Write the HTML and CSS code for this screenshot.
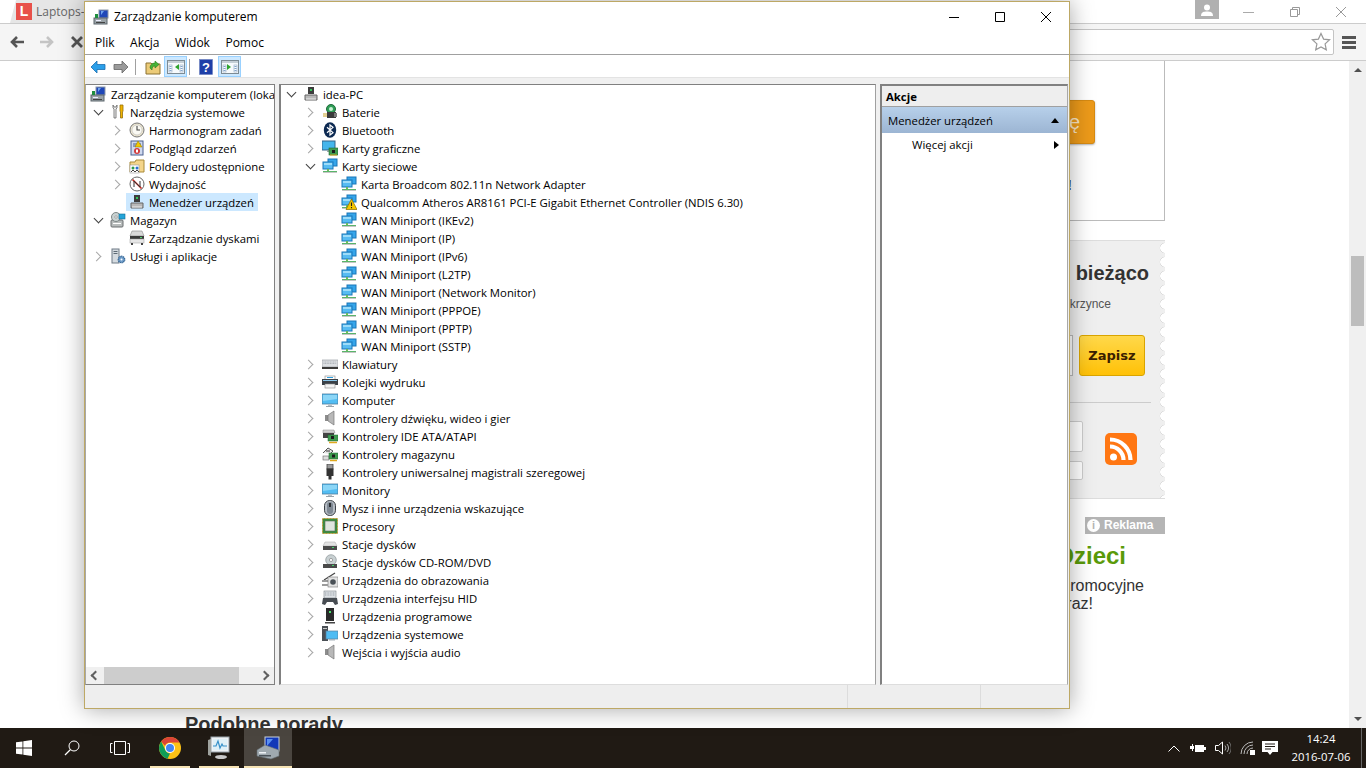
FILE: index.html
```html
<!DOCTYPE html>
<html lang="pl">
<head>
<meta charset="utf-8">
<title>Zarządzanie komputerem</title>
<link rel="stylesheet" href="styles.css">
</head>
<body>
<svg class="sprite" xmlns="http://www.w3.org/2000/svg">
  <symbol id="i-comp" viewBox="0 0 16 16"><rect x="6" y="1" width="9" height="8" fill="#1f47b8" stroke="#8b97a8"/><path d="M8 2h3L8 6z" fill="#6fa4ef"/><rect x="1" y="9" width="13" height="6" fill="#9aa3a8" stroke="#5d666c"/><rect x="3" y="11" width="5" height="1" fill="#eef"/><rect x="3" y="13" width="9" height="1" fill="#444"/><path d="M2 5h3v4H2z" fill="#1e8e3e"/></symbol>
  <symbol id="i-tools" viewBox="0 0 16 16"><path d="M3 1v3l1 1v9h2V5l1-1V1L6 3H4z" fill="#eee" stroke="#666" stroke-width=".8"/><path d="M10 1h3v6l-.5 1v6h-2V8L10 7z" fill="#f0b400" stroke="#94700b" stroke-width=".8"/></symbol>
  <symbol id="i-clock" viewBox="0 0 16 16"><circle cx="8" cy="8" r="7" fill="#ece6d0" stroke="#777"/><circle cx="8" cy="8" r="5" fill="#fbfaf3" stroke="#bbb" stroke-width=".6"/><path d="M8 4v4h3" fill="none" stroke="#444" stroke-width="1.1"/></symbol>
  <symbol id="i-event" viewBox="0 0 16 16"><rect x="2" y="1" width="12" height="14" fill="#cfd9ef" stroke="#4a5f8e"/><path d="M4 4h8M4 6h8" stroke="#4a5f8e"/><path d="M9 1l4 6H6z" fill="#f3c900" stroke="#8d7300" stroke-width=".5"/><circle cx="8" cy="11" r="3" fill="#d23b3b"/><rect x="7" y="9.5" width="2" height="3" fill="#fff"/></symbol>
  <symbol id="i-shared" viewBox="0 0 16 16"><path d="M1 4h5l1-2h8v12H1z" fill="#f4d58a" stroke="#a98a39"/><rect x="1" y="7" width="9" height="8" fill="#fff" stroke="#999" stroke-width=".6"/><circle cx="4" cy="10" r="1.5" fill="#2e9a45"/><circle cx="8" cy="10" r="1.5" fill="#2a6fd0"/><path d="M2 14l2-2 2 2M6 14l2-2 2 2" fill="none" stroke="#444"/></symbol>
  <symbol id="i-perf" viewBox="0 0 16 16"><circle cx="8" cy="8" r="7" fill="#fff" stroke="#666"/><path d="M3.5 3.5l9 9" stroke="#c8281e" stroke-width="1.6"/><path d="M5 11V5l6 6V5" fill="none" stroke="#333"/></symbol>
  <symbol id="i-dev" viewBox="0 0 16 16"><path d="M5 1h6v7H5z" fill="#3c3c3c"/><rect x="7" y="3" width="2" height="2" fill="#34c759"/><path d="M2 9h12v5H2z" fill="#b8b8b8" stroke="#666"/><path d="M3 13h10" stroke="#eee"/></symbol>
  <symbol id="i-storage" viewBox="0 0 16 16"><rect x="1" y="8" width="12" height="7" rx="1" fill="#b8bcbc" stroke="#6a6e70"/><circle cx="6" cy="5" r="4.5" fill="#c9d2d2" stroke="#7d8686"/><circle cx="6" cy="5" r="1.2" fill="#fff" stroke="#666" stroke-width=".5"/><rect x="9" y="2" width="6" height="5" fill="#25a4d8" stroke="#126d95" stroke-width=".6"/><rect x="3" y="11" width="8" height="1" fill="#fff"/></symbol>
  <symbol id="i-disk" viewBox="0 0 16 16"><path d="M3 1h10l2 5H1z" fill="#d9d9d9" stroke="#888" stroke-width=".6"/><rect x="1" y="6" width="14" height="3" fill="#3a3a3a"/><rect x="1" y="9" width="14" height="4" fill="#e6e6e6" stroke="#999" stroke-width=".5"/><rect x="11" y="7" width="2" height="1" fill="#4ed06a"/><rect x="2" y="13" width="2" height="2" fill="#444"/><rect x="12" y="13" width="2" height="2" fill="#444"/></symbol>
  <symbol id="i-serv" viewBox="0 0 16 16"><rect x="2" y="1" width="7" height="14" fill="#d5dbe0" stroke="#6f7b85"/><path d="M3.5 3.5h4M3.5 5.5h4" stroke="#5d6a75"/><circle cx="11.5" cy="11.5" r="3.2" fill="#6e9cc9" stroke="#3a6a98" stroke-dasharray="1.2 .6" stroke-width="1.4"/><circle cx="11.5" cy="11.5" r="1" fill="#fff"/></symbol>
  <symbol id="i-bat" viewBox="0 0 16 16"><circle cx="9" cy="5" r="4.5" fill="#2f9e56" stroke="#1e6b3a"/><circle cx="9" cy="5" r="2" fill="#c8f0d4"/><rect x="5" y="8" width="9" height="6" fill="#3a3a3a"/><path d="M1 10h4M1 12h4" stroke="#c9a227" stroke-width="1.2"/><rect x="12" y="9" width="3" height="4" fill="#7a7a7a"/></symbol>
  <symbol id="i-bt" viewBox="0 0 16 16"><ellipse cx="8" cy="8" rx="6.2" ry="7.7" fill="#0d2a52"/><path d="M5 5.2l6 5.4L8 13V3l3 2.4-6 5.4" fill="none" stroke="#fff" stroke-width="1.2"/></symbol>
  <symbol id="i-gpu" viewBox="0 0 16 16"><rect x="0" y="1" width="13" height="9" fill="#45b6ec" stroke="#35648a"/><path d="M5 10h3v2H5z" fill="#9aa"/><rect x="7" y="8" width="9" height="7" fill="#3f9b4f" stroke="#1f6a30" stroke-width=".6"/><rect x="10" y="10" width="3" height="3" fill="#1c1c1c"/><path d="M8 15h7" stroke="#d9a520"/></symbol>
  <symbol id="i-net" viewBox="0 0 16 16"><rect x="6" y="1" width="9" height="7" fill="#35a5ea" stroke="#1a76b8"/><rect x="1" y="4" width="10" height="7" fill="#57bcf2" stroke="#1a76b8"/><rect x="2" y="5" width="8" height="2" fill="#9ddcf9"/><rect x="5" y="11" width="2" height="2" fill="#6fbb5c"/><rect x="1" y="13" width="14" height="2" fill="#5ab56a"/><rect x="1" y="14" width="14" height="1" fill="#c6c6c6"/></symbol>
  <symbol id="i-netw" viewBox="0 0 16 16"><use href="#i-net"/><path d="M10.5 5L16 15.5H5z" fill="#f6c700" stroke="#8a6a00" stroke-width=".7"/><path d="M10.5 8.5v3.6M10.5 13v1.2" stroke="#222" stroke-width="1.1"/></symbol>
  <symbol id="i-key" viewBox="0 0 16 16"><rect x="0" y="4" width="16" height="7" fill="#dcdfe3" stroke="#8c9298" stroke-width=".6"/><path d="M1.5 6h13M1.5 7.5h13" stroke="#aeb3b9" stroke-dasharray="1 .6"/><rect x="0" y="11" width="16" height="2" fill="#3a3a3a"/></symbol>
  <symbol id="i-print" viewBox="0 0 16 16"><rect x="3" y="2" width="10" height="4" fill="#fff" stroke="#888" stroke-width=".6"/><rect x="5" y="3" width="6" height="1" fill="#2fa0e0"/><rect x="0" y="5" width="16" height="6" fill="#3a4046"/><rect x="1" y="6" width="14" height="1" fill="#8ac6ea"/><rect x="3" y="10" width="10" height="4" fill="#f4f4f4" stroke="#888" stroke-width=".6"/></symbol>
  <symbol id="i-mon" viewBox="0 0 16 16"><rect x="0" y="2" width="16" height="10" fill="#52bdf3" stroke="#4d7d9e" stroke-width=".8"/><path d="M1 3h14v4L1 9z" fill="#8bd6f7"/><rect x="6" y="12" width="4" height="2" fill="#b9c3ca"/><rect x="4" y="14" width="8" height="1" fill="#9aa4ab"/></symbol>
  <symbol id="i-snd" viewBox="0 0 16 16"><path d="M3 5h3v6H3z" fill="#8d8d8d"/><path d="M6 5l6-4v14l-6-4z" fill="#b8b8b8" stroke="#777" stroke-width=".7"/></symbol>
  <symbol id="i-ide" viewBox="0 0 16 16"><path d="M1 2h11l1 3H1z" fill="#cfcfcf" stroke="#888" stroke-width=".5"/><rect x="1" y="5" width="11" height="5" fill="#444"/><rect x="6" y="7" width="10" height="6" fill="#3f9b4f" stroke="#1f6a30" stroke-width=".5"/><rect x="9" y="8" width="3" height="3" fill="#1c1c1c"/><path d="M7 14.500h8" stroke="#e0a91f" stroke-width="1.500"/></symbol>
  <symbol id="i-stor" viewBox="0 0 16 16"><path d="M1 7l5-5 5 3-3 3" fill="#e5e5e5" stroke="#555"/><path d="M4 5h4" stroke="#333"/><rect x="1" y="10" width="6" height="4" fill="#ddd" stroke="#666" stroke-width=".6"/><rect x="7" y="7" width="9" height="6" fill="#3f9b4f" stroke="#1f6a30" stroke-width=".5"/><rect x="10" y="8.500" width="3" height="3" fill="#1c1c1c"/><path d="M8 14.500h7" stroke="#e0a91f" stroke-width="1.500"/></symbol>
  <symbol id="i-usb" viewBox="0 0 16 16"><rect x="5" y="0" width="6" height="5" fill="#9a9a9a" stroke="#444" stroke-width=".8"/><path d="M4.500 4.500h7V12h-2v3.500h-3V12h-2z" fill="#333"/></symbol>
  <symbol id="i-mouse" viewBox="0 0 16 16"><rect x="2.500" y="0.500" width="11" height="15" rx="5.200" fill="#b5bcc4" stroke="#3b4046"/><rect x="5" y="2" width="6" height="12" rx="3" fill="#7e8893"/><rect x="7" y="3" width="2" height="4" fill="#2b2f33"/></symbol>
  <symbol id="i-cpu" viewBox="0 0 16 16"><rect x="0.500" y="0.500" width="15" height="15" fill="#3b8b3f" stroke="#bf9a37" stroke-dasharray="1 .5"/><rect x="3" y="3" width="10" height="10" fill="#dfe5df" stroke="#5a6d5a" stroke-width=".6"/></symbol>
  <symbol id="i-hdd" viewBox="0 0 16 16"><path d="M3 6h10l2 4H1z" fill="#e3e3e3" stroke="#a5a5a5" stroke-width=".5"/><rect x="1" y="10" width="14" height="4" fill="#4a4a4a"/><rect x="10" y="11" width="2" height="1" fill="#45d36a"/></symbol>
  <symbol id="i-cd" viewBox="0 0 16 16"><circle cx="9" cy="6" r="5.300" fill="#c8d0d2" stroke="#8b9497" stroke-width=".7"/><circle cx="9" cy="6" r="1.600" fill="#fff" stroke="#777" stroke-width=".6"/><rect x="1" y="10" width="14" height="4" fill="#4a4a4a"/><rect x="10" y="11" width="2" height="1" fill="#45d36a"/></symbol>
  <symbol id="i-img" viewBox="0 0 16 16"><path d="M2 8L13 1" stroke="#444" stroke-width="1.200"/><rect x="0" y="8" width="6" height="2" fill="#9c9c9c"/><rect x="6" y="5" width="10" height="10" fill="#e3e3e3" stroke="#777" stroke-width=".6"/><circle cx="11" cy="10" r="2.800" fill="#4a5157"/><rect x="0" y="12" width="6" height="2" fill="#9c9c9c"/></symbol>
  <symbol id="i-hid" viewBox="0 0 16 16"><rect x="2" y="1" width="12" height="7" fill="#dfe3e7" stroke="#7c8288" stroke-width=".6"/><path d="M3 3h10M3 5h10" stroke="#9aa1a8" stroke-dasharray="1 .6"/><path d="M1 8h14l1 6-3 1-2-3H5l-2 3-3-1z" fill="#474c52"/></symbol>
  <symbol id="i-soft" viewBox="0 0 16 16"><rect x="4" y="0" width="8" height="13" fill="#2a2a2a"/><rect x="7" y="3" width="2" height="2" fill="#4be06e"/><rect x="3" y="14" width="10" height="1.500" fill="#444"/></symbol>
  <symbol id="i-sys" viewBox="0 0 16 16"><rect x="0" y="0" width="6" height="15" fill="#4a4f55"/><rect x="1" y="2" width="4" height="1" fill="#c9c9c9"/><rect x="4" y="5" width="12" height="8" fill="#4fbcf3" stroke="#5a7f9c" stroke-width=".7"/><rect x="7" y="13" width="6" height="1.500" fill="#aab4bb"/></symbol>
  <symbol id="i-folder" viewBox="0 0 16 16"><path d="M1 4h5l1 1h8v10H1z" fill="#eccb78" stroke="#8c7333"/><path d="M5 9c0-3 2-5 5-5V2l4 3.500L10 9V7C8 7 7 8 7 11z" fill="#46b239" stroke="#2a7a20" stroke-width=".6"/></symbol>
  <symbol id="i-pane" viewBox="0 0 18 16"><rect x="0.500" y="1.500" width="17" height="13" fill="#f7fafc" stroke="#7d8b94"/><rect x="1" y="2" width="16" height="2" fill="#c4ced5"/><rect x="2" y="6" width="3" height="7" fill="#fff" stroke="#8fa9c4" stroke-width=".6"/><path d="M2.500 7.500h2M2.500 9.500h2M2.500 11.500h2" stroke="#4a7cb5" stroke-width=".7"/><rect x="13" y="6" width="3" height="7" fill="#fff" stroke="#8fa9c4" stroke-width=".6"/><path d="M13.500 7.500h2M13.500 9.500h2M13.500 11.500h2" stroke="#4a7cb5" stroke-width=".7"/></symbol>
  <symbol id="i-perfmon" viewBox="0 0 24 24"><rect x="4" y="1" width="18" height="15" fill="#eef2f5" stroke="#9aa3aa"/><rect x="6" y="3" width="14" height="11" fill="#dff0f7"/><path d="M6 10h3l2-5 2 7 2-4 1 2h4" fill="none" stroke="#3790c9" stroke-width="1.200"/><path d="M1 4v15l3 1V3z" fill="#9fa39f"/><ellipse cx="14" cy="21" rx="6" ry="2" fill="#c9c9c9"/></symbol>
  <symbol id="i-mgmt" viewBox="0 0 24 24"><rect x="9" y="1" width="14" height="14" fill="#1238b8" stroke="#c7d1da"/><path d="M11 3h6l-6 7z" fill="#5a8ff0"/><path d="M1 14l8-5 14 5v6l-8 3-14-3z" fill="#9fa9af" stroke="#646e74" stroke-width=".6"/><rect x="3" y="16" width="7" height="1.500" fill="#eef2f5"/><rect x="3" y="19" width="12" height="1.500" fill="#4a5258"/></symbol>
  <symbol id="i-chrome" viewBox="0 0 22 22"><circle cx="11" cy="11" r="11" fill="#fbc116"/><path d="M11 0a11 11 0 0 1 9.530 5.500H11a5.500 5.500 0 0 0-5 3.200L2.200 4.500A11 11 0 0 1 11 0z" fill="#db4437"/><path d="M2.200 4.500L6.500 13.500a5.500 5.500 0 0 0 4.500 3l-2.500 5.200A11 11 0 0 1 2.200 4.500z" fill="#0f9d58"/><circle cx="11" cy="11" r="5" fill="#fff"/><circle cx="11" cy="11" r="4" fill="#4285f4"/></symbol>
</svg>

<div class="browser">
  <div class="tabstrip">
    <div class="tab"><span class="favicon">L</span><span class="tabtitle">Laptops-</span></div>
    <div class="profile"><svg class="profile-ic" viewBox="0 0 14 12"><circle cx="7" cy="3.500" r="3" fill="#fff"/><path d="M1 12c0-4 3-4.500 6-4.500s6 .5 6 4.500z" fill="#fff"/></svg></div>
    <div class="bctrl"><svg class="bctrl-ic" viewBox="0 0 12 12"><path d="M0 6.500h11" stroke="#aaa"/></svg></div>
    <div class="bctrl"><svg class="bctrl-ic" viewBox="0 0 12 12"><path d="M1.500 3.500h7v7h-7zM3.500 3.500v-2h7v7h-2" fill="none" stroke="#999"/></svg></div>
    <div class="bctrl"><svg class="bctrl-ic" viewBox="0 0 12 12"><path d="M1 1l10 10M11 1L1 11" stroke="#999"/></svg></div>
  </div>
  <div class="toolbar">
    <svg class="nav" viewBox="0 0 16 16"><path d="M15 8H3M8 3L3 8l5 5" fill="none" stroke="#555" stroke-width="2.600"/></svg>
    <svg class="nav" viewBox="0 0 16 16"><path d="M1 8h12M8 3l5 5-5 5" fill="none" stroke="#c4c4c4" stroke-width="2.600"/></svg>
    <svg class="nav" viewBox="0 0 16 16"><path d="M3 3l10 10M13 3L3 13" fill="none" stroke="#555" stroke-width="2.800"/></svg>
    <div class="omnibox"><svg class="star" viewBox="0 0 20 20"><path d="M10 1.500l2.600 5.600 6 .7-4.500 4.100 1.200 6L10 15l-5.300 2.900 1.200-6L1.400 7.800l6-.7z" fill="#fff" stroke="#999" stroke-width="1.200"/></svg></div>
    <div class="burger"><i></i><i></i><i></i></div>
  </div>
  <div class="page">
    <div class="main"><h2 class="similar">Podobne porady</h2></div>
    <div class="side">
      <div class="promo">
        <div class="orange">ę</div>
        <div class="bang">!</div>
      </div>
      <div class="newsletter">
        <div class="nl-title">bieżąco</div>
        <div class="nl-sub">krzynce</div>
        <div class="nl-form"><div class="nl-input"></div><div class="nl-btn">Zapisz</div></div>
        <div class="nl-rule"></div>
        <div class="nl-lower">
          <div class="nl-boxes"><div class="nl-box1"></div><div class="nl-box2"></div></div>
          <svg class="rss" viewBox="0 0 32 32"><rect width="32" height="32" rx="5" fill="#ff7713"/><circle cx="8.500" cy="24" r="3.500" fill="#fff"/><path d="M5 13.500a13.500 13.500 0 0 1 13.500 13.500M5 6.500a20.500 20.500 0 0 1 20.500 20.500" fill="none" stroke="#fff" stroke-width="4.200"/></svg>
        </div>
      </div>
      <div class="ad"><span class="ad-i">i</span>Reklama</div>
      <div class="ad-title">Dzieci</div>
      <div class="ad-text">romocyjne</div>
      <div class="ad-text2">raz!</div>
    </div>
    <div class="gutter"></div>
    <div class="scroll"><i class="up"></i><i class="thumb"></i><i class="down"></i></div>
  </div>
</div>

<div class="taskbar">
  <div class="tb"><svg class="tb-ic" viewBox="0 0 16 16"><path d="M0 2.300l6.500-.9v6.200H0zM7.300 1.300L16 0v7.600H7.300zM0 8.400h6.500v6.200L0 13.700zM7.300 8.400H16V16l-8.700-1.300z" fill="#fff"/></svg></div>
  <div class="tb"><svg class="tb-ic" viewBox="0 0 16 16"><circle cx="10" cy="6" r="5" fill="none" stroke="#fff"/><path d="M6.500 9.500L1 15" stroke="#fff" stroke-width="1.300"/></svg></div>
  <div class="tb"><svg class="tb-wide" viewBox="0 0 20 14"><path d="M4.500.5h11v13h-11zM2.500 2.500H.5v9h2M17.500 2.500h2v9h-2" fill="none" stroke="#fff"/></svg></div>
  <div class="tb app app1"><svg class="tb-chrome"><use href="#i-chrome"/></svg></div>
  <div class="tb app app2"><svg class="tb-big"><use href="#i-perfmon"/></svg></div>
  <div class="tb app active"><svg class="tb-big"><use href="#i-mgmt"/></svg></div>
  <div class="tray">
    <svg class="tr-chev" viewBox="0 0 12 7"><path d="M.5 6.500L6 1l5.500 5.500" fill="none" stroke="#fff"/></svg>
    <svg class="tr-ic" viewBox="0 0 16 12"><path d="M0 4h2V2h1v2h1v3H3v2H2V7H0z" fill="#fff"/><rect x="5" y="3" width="9" height="7" fill="#fff"/><rect x="14" y="5" width="2" height="3" fill="#fff"/></svg>
    <svg class="tr-ic" viewBox="0 0 16 14"><path d="M.5 4.500h3l4-3.500v12l-4-3.500h-3z" fill="none" stroke="#fff"/><path d="M10 4.500a4 4 0 0 1 0 5M12 3a6.500 6.500 0 0 1 0 8" fill="none" stroke="#aaa"/><path d="M14 1a9 9 0 0 1 0 12" fill="none" stroke="#777"/></svg>
    <svg class="tr-ic" viewBox="0 0 16 14"><path d="M1 13a12 12 0 0 1 12-12M4 13a9 9 0 0 1 9-9M7 13a6 6 0 0 1 6-6" fill="none" stroke="#bbb"/><rect x="10" y="9" width="5" height="5" fill="#fff"/></svg>
    <svg class="tr-note" viewBox="0 0 16 15"><path d="M0 0h16v11h-5.500L8 14l-2.500-3H0z" fill="#fff"/><path d="M3 3h10M3 5.500h10M3 8h6" stroke="#201a14"/></svg>
    <div class="clock"><div>14:24</div><div>2016-07-06</div></div>
    <div class="showdesk"></div>
  </div>
</div>

<div class="window">
  <div class="titlebar">
    <svg class="ic"><use href="#i-comp"/></svg>
    <span class="wintitle">Zarządzanie komputerem</span>
    <div class="wctrls">
      <div class="wctrl"><svg class="wc-ic" viewBox="0 0 12 12"><path d="M1 6.500h10" stroke="#000"/></svg></div>
      <div class="wctrl"><svg class="wc-ic" viewBox="0 0 12 12"><path d="M1.500 1.500h9v9h-9z" fill="none" stroke="#000"/></svg></div>
      <div class="wctrl"><svg class="wc-ic" viewBox="0 0 12 12"><path d="M1 1l10 10M11 1L1 11" stroke="#000"/></svg></div>
    </div>
  </div>
  <div class="menubar"><span>Plik</span><span>Akcja</span><span>Widok</span><span>Pomoc</span></div>
  <div class="wtools">
    <svg class="t-arrow" viewBox="0 0 16 14"><path d="M7 1L1 7l6 6V9.500h8v-5H7z" fill="#2b9fe9" stroke="#1a6fb0" stroke-width=".8"/></svg>
    <svg class="t-arrow fwd" viewBox="0 0 16 14"><path d="M9 1l6 6-6 6V9.500H1v-5h8z" fill="#9b9b9b" stroke="#666" stroke-width=".8"/></svg>
    <i class="t-sep"></i>
    <svg class="ic t-folder"><use href="#i-folder"/></svg>
    <div class="t-btn"><svg class="pane-ic"><use href="#i-pane"/></svg><i class="tri-l"></i></div>
    <i class="t-sep s2"></i>
    <svg class="ic t-help" viewBox="0 0 16 16"><rect x="0.500" y="0.500" width="13" height="15" fill="#1e3fa8" stroke="#6a7fbf" stroke-width=".6"/><text x="7" y="13" text-anchor="middle" class="qm">?</text></svg>
    <div class="t-btn b2"><svg class="pane-ic"><use href="#i-pane"/></svg><i class="tri-r"></i></div>
  </div>
  <div class="body">
    <div class="pane left">
      <div class="tree">
        <div class="row l0"><span class="item root"><svg class="ic"><use href="#i-comp"/></svg><span>Zarządzanie komputerem (lokalne)</span></span></div>
        <div class="row l1"><i class="car open"></i><span class="item"><svg class="ic"><use href="#i-tools"/></svg><span>Narzędzia systemowe</span></span></div>
        <div class="row l2"><i class="car"></i><span class="item"><svg class="ic"><use href="#i-clock"/></svg><span>Harmonogram zadań</span></span></div>
        <div class="row l2"><i class="car"></i><span class="item"><svg class="ic"><use href="#i-event"/></svg><span>Podgląd zdarzeń</span></span></div>
        <div class="row l2"><i class="car"></i><span class="item"><svg class="ic"><use href="#i-shared"/></svg><span>Foldery udostępnione</span></span></div>
        <div class="row l2"><i class="car"></i><span class="item"><svg class="ic"><use href="#i-perf"/></svg><span>Wydajność</span></span></div>
        <div class="row l2"><i class="nocar"></i><span class="item sel"><svg class="ic"><use href="#i-dev"/></svg><span>Menedżer urządzeń</span></span></div>
        <div class="row l1"><i class="car open"></i><span class="item"><svg class="ic"><use href="#i-storage"/></svg><span>Magazyn</span></span></div>
        <div class="row l2"><i class="nocar"></i><span class="item"><svg class="ic"><use href="#i-disk"/></svg><span>Zarządzanie dyskami</span></span></div>
        <div class="row l1"><i class="car"></i><span class="item"><svg class="ic"><use href="#i-serv"/></svg><span>Usługi i aplikacje</span></span></div>
      </div>
      <div class="hscroll"><i class="hl"></i><i class="hthumb"></i><i class="hr"></i></div>
    </div>
    <div class="pane mid">
      <div class="row m0"><i class="car open"></i><span class="item"><svg class="ic"><use href="#i-dev"/></svg><span>idea-PC</span></span></div>
      <div class="row m1"><i class="car"></i><span class="item"><svg class="ic"><use href="#i-bat"/></svg><span>Baterie</span></span></div>
      <div class="row m1"><i class="car"></i><span class="item"><svg class="ic"><use href="#i-bt"/></svg><span>Bluetooth</span></span></div>
      <div class="row m1"><i class="car"></i><span class="item"><svg class="ic"><use href="#i-gpu"/></svg><span>Karty graficzne</span></span></div>
      <div class="row m1"><i class="car open"></i><span class="item"><svg class="ic"><use href="#i-net"/></svg><span>Karty sieciowe</span></span></div>
      <div class="row m2"><i class="nocar"></i><span class="item"><svg class="ic"><use href="#i-net"/></svg><span>Karta Broadcom 802.11n Network Adapter</span></span></div>
      <div class="row m2"><i class="nocar"></i><span class="item"><svg class="ic"><use href="#i-netw"/></svg><span>Qualcomm Atheros AR8161 PCI-E Gigabit Ethernet Controller (NDIS 6.30)</span></span></div>
      <div class="row m2"><i class="nocar"></i><span class="item"><svg class="ic"><use href="#i-net"/></svg><span>WAN Miniport (IKEv2)</span></span></div>
      <div class="row m2"><i class="nocar"></i><span class="item"><svg class="ic"><use href="#i-net"/></svg><span>WAN Miniport (IP)</span></span></div>
      <div class="row m2"><i class="nocar"></i><span class="item"><svg class="ic"><use href="#i-net"/></svg><span>WAN Miniport (IPv6)</span></span></div>
      <div class="row m2"><i class="nocar"></i><span class="item"><svg class="ic"><use href="#i-net"/></svg><span>WAN Miniport (L2TP)</span></span></div>
      <div class="row m2"><i class="nocar"></i><span class="item"><svg class="ic"><use href="#i-net"/></svg><span>WAN Miniport (Network Monitor)</span></span></div>
      <div class="row m2"><i class="nocar"></i><span class="item"><svg class="ic"><use href="#i-net"/></svg><span>WAN Miniport (PPPOE)</span></span></div>
      <div class="row m2"><i class="nocar"></i><span class="item"><svg class="ic"><use href="#i-net"/></svg><span>WAN Miniport (PPTP)</span></span></div>
      <div class="row m2"><i class="nocar"></i><span class="item"><svg class="ic"><use href="#i-net"/></svg><span>WAN Miniport (SSTP)</span></span></div>
      <div class="row m1"><i class="car"></i><span class="item"><svg class="ic"><use href="#i-key"/></svg><span>Klawiatury</span></span></div>
      <div class="row m1"><i class="car"></i><span class="item"><svg class="ic"><use href="#i-print"/></svg><span>Kolejki wydruku</span></span></div>
      <div class="row m1"><i class="car"></i><span class="item"><svg class="ic"><use href="#i-mon"/></svg><span>Komputer</span></span></div>
      <div class="row m1"><i class="car"></i><span class="item"><svg class="ic"><use href="#i-snd"/></svg><span>Kontrolery dźwięku, wideo i gier</span></span></div>
      <div class="row m1"><i class="car"></i><span class="item"><svg class="ic"><use href="#i-ide"/></svg><span>Kontrolery IDE ATA/ATAPI</span></span></div>
      <div class="row m1"><i class="car"></i><span class="item"><svg class="ic"><use href="#i-stor"/></svg><span>Kontrolery magazynu</span></span></div>
      <div class="row m1"><i class="car"></i><span class="item"><svg class="ic"><use href="#i-usb"/></svg><span>Kontrolery uniwersalnej magistrali szeregowej</span></span></div>
      <div class="row m1"><i class="car"></i><span class="item"><svg class="ic"><use href="#i-mon"/></svg><span>Monitory</span></span></div>
      <div class="row m1"><i class="car"></i><span class="item"><svg class="ic"><use href="#i-mouse"/></svg><span>Mysz i inne urządzenia wskazujące</span></span></div>
      <div class="row m1"><i class="car"></i><span class="item"><svg class="ic"><use href="#i-cpu"/></svg><span>Procesory</span></span></div>
      <div class="row m1"><i class="car"></i><span class="item"><svg class="ic"><use href="#i-hdd"/></svg><span>Stacje dysków</span></span></div>
      <div class="row m1"><i class="car"></i><span class="item"><svg class="ic"><use href="#i-cd"/></svg><span>Stacje dysków CD-ROM/DVD</span></span></div>
      <div class="row m1"><i class="car"></i><span class="item"><svg class="ic"><use href="#i-img"/></svg><span>Urządzenia do obrazowania</span></span></div>
      <div class="row m1"><i class="car"></i><span class="item"><svg class="ic"><use href="#i-hid"/></svg><span>Urządzenia interfejsu HID</span></span></div>
      <div class="row m1"><i class="car"></i><span class="item"><svg class="ic"><use href="#i-soft"/></svg><span>Urządzenia programowe</span></span></div>
      <div class="row m1"><i class="car"></i><span class="item"><svg class="ic"><use href="#i-sys"/></svg><span>Urządzenia systemowe</span></span></div>
      <div class="row m1"><i class="car"></i><span class="item"><svg class="ic"><use href="#i-snd"/></svg><span>Wejścia i wyjścia audio</span></span></div>
    </div>
    <div class="pane act">
      <div class="act-h">Akcje</div>
      <div class="act-s"><span>Menedżer urządzeń</span><i class="tri-up"></i></div>
      <div class="act-r"><span>Więcej akcji</span><i class="tri-more"></i></div>
    </div>
  </div>
  <div class="status"><i class="st1"></i><i class="st2"></i><i class="st3"></i></div>
</div>
</body>
</html>
```
FILE: styles.css
```css
* { box-sizing: border-box; }
html, body { margin: 0; padding: 0; }
body { width: 1366px; height: 768px; overflow: hidden; position: relative; display: flex; flex-direction: column; font-family: "Liberation Sans", Arial, sans-serif; background: #fff; }
.sprite { display: none; }
i { display: block; }

/* browser */
.browser { height: 728px; display: flex; flex-direction: column; overflow: hidden; background: #fff; }
.tabstrip { height: 24px; flex: none; display: flex; align-items: flex-start; padding-right: 2px; background: #fff; border-bottom: 1px solid #ccc; }
.tab { width: 100px; height: 23px; flex: none; margin-left: 10px; padding-left: 6px; display: flex; gap: 4px; align-items: center; background: #e6e6e6; clip-path: polygon(0 100%, 6px 0, 100% 0, 100% 100%); }
.favicon { width: 16px; height: 17px; background: #e8514a; color: #fff; font-weight: bold; font-size: 14px; line-height: 17px; text-align: center; }
.tabtitle { font: 12px "Open Sans", sans-serif; color: #666; }
.profile { margin-left: auto; margin-right: 7px; width: 24px; height: 19px; flex: none; background: #b0b0b0; display: flex; align-items: center; justify-content: center; }
.profile-ic { width: 14px; height: 12px; }
.bctrl { width: 46px; height: 23px; flex: none; display: flex; align-items: center; justify-content: center; }
.bctrl-ic { width: 12px; height: 12px; }
.toolbar { height: 37px; flex: none; display: flex; align-items: center; padding-left: 9px; gap: 14px; background: #f5f5f5; border-bottom: 1px solid #ccc; }
.nav { width: 16px; height: 16px; }
.omnibox { flex: 1; height: 26px; background: #fff; border: 1px solid #c4c4c4; border-radius: 2px; display: flex; justify-content: flex-end; align-items: center; padding-right: 2px; }
.star { width: 20px; height: 20px; }
.burger { width: 14px; flex: none; margin-right: 10px; margin-left: -6px; display: flex; flex-direction: column; gap: 2px; }
.burger i { height: 3px; background: #555; }

.page { flex: 1; display: flex; background: #fff; overflow: hidden; }
.main { flex: 1; padding: 651px 0 0 185px; }
.similar { margin: 0; font-size: 20px; line-height: 24px; color: #333; white-space: nowrap; }
.side { width: 320px; flex: none; display: flex; flex-direction: column; align-items: flex-end; }
.promo { width: 100%; height: 160px; border: 1px solid #bbb; border-top: 0; padding-top: 39px; display: flex; flex-direction: column; align-items: flex-end; padding-right: 69px; }
.orange { width: 130px; height: 44px; background: #ec9a1a; border: 1px solid #d68a12; border-radius: 3px; box-shadow: 0 1px 2px rgba(0,0,0,.3); color: #fbe6c4; font-size: 20px; line-height: 42px; text-align: right; padding-right: 14px; }
.bang { font-size: 14px; font-weight: bold; color: #333; margin-top: 33px; margin-right: 23px; line-height: 16px; }
.newsletter { position: relative; width: 100%; margin-top: 19px; height: 259px; background: #efefef; border-top: 1px solid #ddd; border-bottom: 1px solid #ddd; display: flex; flex-direction: column; align-items: flex-end; padding-right: 16px; }
.newsletter::after { content: ""; position: absolute; right: 0; top: 0; bottom: 0; width: 6px; background: radial-gradient(circle at 100% 50%, #fff 4.5px, #d8d8d8 5px, transparent 5.6px) 0 0 / 6px 14px repeat-y; }
.nl-title { margin-top: 20px; font-size: 20px; line-height: 24px; font-weight: bold; color: #333; }
.nl-sub { margin-top: 12px; margin-right: 38px; font-size: 12px; line-height: 14px; color: #555; }
.nl-form { margin-top: 24px; margin-right: 4px; display: flex; gap: 6px; }
.nl-input { width: 60px; height: 41px; background: #fff; border: 1px solid #bbb; }
.nl-btn { width: 66px; height: 41px; background: linear-gradient(#ffd84a, #ffc107); border: 1px solid #d9a400; border-radius: 3px; color: #3a2000; font: bold 13px/39px "DejaVu Sans", sans-serif; text-align: center; }
.nl-rule { width: 300px; height: 1px; margin-top: 26px; margin-right: -2px; background: #ccc; }
.nl-lower { margin-top: 18px; margin-right: 12px; display: flex; align-items: flex-start; gap: 22px; }
.nl-boxes { display: flex; flex-direction: column; gap: 9px; }
.nl-box1 { width: 60px; height: 31px; background: #fff; border: 1px solid #ccc; border-radius: 2px; }
.nl-box2 { width: 60px; height: 19px; background: #fff; border: 1px solid #ccc; border-radius: 2px; }
.rss { width: 32px; height: 32px; margin-top: 12px; }
.ad { margin-top: 18px; width: 80px; height: 17px; background: #b5b5b5; color: #fff; font-size: 12px; font-weight: bold; line-height: 17px; display: flex; gap: 4px; align-items: center; padding-left: 2px; }
.ad-i { width: 13px; height: 13px; border-radius: 50%; background: #fff; color: #b5b5b5; font-size: 11px; line-height: 13px; text-align: center; }
.ad-title { margin-top: 8px; margin-right: 39px; font-size: 24px; line-height: 28px; font-weight: bold; color: #5a9a0a; }
.ad-text { margin-top: 7px; margin-right: 21px; font-size: 16px; line-height: 18px; color: #333; }
.ad-text2 { margin-right: 72px; font-size: 16px; line-height: 18px; color: #333; }
.gutter { width: 184px; flex: none; }
.scroll { width: 17px; flex: none; background: #f0f0f0; display: flex; flex-direction: column; align-items: center; padding-top: 7px; }
.scroll .up { width: 0; height: 0; border: 4px solid transparent; border-top: 0; border-bottom: 4px solid #505050; }
.scroll .thumb { width: 13px; height: 70px; margin-top: 184px; background: #bdbdbd; }
.scroll .down { width: 0; height: 0; margin-top: auto; margin-bottom: 7px; border: 4px solid transparent; border-bottom: 0; border-top: 4px solid #505050; }

/* taskbar */
.taskbar { height: 40px; flex: none; display: flex; background: #201a14; }
.tb { width: 48px; height: 40px; flex: none; display: flex; align-items: center; justify-content: center; }
.tb-ic { width: 16px; height: 16px; }
.tb-wide { width: 20px; height: 14px; }
.tb-chrome { width: 22px; height: 22px; }
.tb-big { width: 24px; height: 24px; }
.app { box-shadow: inset 0 -2px 0 0 #f6e3b4; width: 40px; }
.app1 { margin-left: 6px; }
.app2 { margin-left: 9px; margin-right: 5px; }
.active { width: 48px; background: #4a453f; }
.tray { margin-left: auto; display: flex; align-items: center; color: #fff; }
.tr-chev { width: 12px; height: 7px; margin-right: 10px; }
.tr-ic { width: 16px; height: 14px; margin-right: 9px; }
.tr-ic + .tr-note { margin-left: -3px; }
.tr-note { width: 16px; height: 15px; }
.clock { width: 76px; margin-left: 5px; margin-right: 2px; text-align: center; font: 11.3px/18px "Open Sans", sans-serif; }
.showdesk { width: 1px; height: 40px; background: #666; margin-right: 4px; }

/* window */
.window { position: absolute; left: 84px; top: 1px; width: 986px; height: 708px; background: #fff; border: 1px solid #bda865; box-shadow: 0 0 22px rgba(0,0,0,.35); display: flex; flex-direction: column; font: 11.35px "Open Sans", sans-serif; color: #000; }
.ic { width: 16px; height: 16px; flex: none; }
.pane-ic { width: 18px; height: 16px; }
.titlebar { height: 29px; flex: none; display: flex; align-items: center; padding-left: 8px; gap: 5px; }
.wintitle { font-size: 12px; }
.wctrls { margin-left: auto; display: flex; }
.wctrl { width: 46px; height: 29px; display: flex; align-items: center; justify-content: center; }
.wc-ic { width: 12px; height: 12px; }
.menubar { height: 24px; flex: none; display: flex; align-items: center; gap: 15.5px; padding-left: 10px; border-bottom: 1px solid #a0a0a0; font-size: 12px; }
.wtools { height: 23px; flex: none; display: flex; align-items: center; padding: 1px 0 0 5px; border-bottom: 1px solid #e3e3e3; }
.t-arrow { width: 16px; height: 14px; }
.t-arrow.fwd { margin-left: 7px; }
.t-sep { width: 1px; height: 16px; background: #a0a0a0; margin-left: 6px; }
.t-folder { margin-left: 9px; }
.t-btn { position: relative; width: 23px; height: 21px; margin-left: 3px; background: #cce8ff; border: 1px solid #99d1ff; display: flex; align-items: center; justify-content: center; }
.t-sep.s2 { margin-left: 2px; }
.t-help { margin-left: 9px; }
.qm { fill: #fff; font: bold 13px "Liberation Sans", sans-serif; }
.t-btn.b2 { margin-left: 3px; }
.tri-l, .tri-r { position: absolute; top: 7px; width: 0; height: 0; border: 3px solid transparent; }
.tri-l { left: 10px; border-left: 0; border-right: 4px solid #2da52d; }
.tri-r { left: 8px; border-right: 0; border-left: 4px solid #2da52d; }
.body { flex: 1; min-height: 0; display: flex; padding-top: 6px; background: #f0f0f0; gap: 4px; }
.pane { background: #fff; height: 601px; overflow: hidden; }
.left { width: 190px; flex: none; border: 1px solid #808080; border-left-color: #a8a8a8; display: flex; flex-direction: column; }
.tree { flex: 1; overflow: hidden; white-space: nowrap; }
.row { height: 18px; display: flex; align-items: center; white-space: nowrap; }
.item { display: flex; align-items: center; gap: 4px; padding-left: 3px; padding-right: 4px; margin-left: 1px; height: 18px; }
.item.sel { background: #cce8ff; }
.root { gap: 5px; padding-left: 0; margin-left: 0; }
.car, .nocar { width: 16px; height: 16px; flex: none; position: relative; }
.car::before { content: ""; position: absolute; left: 3px; top: 5px; width: 6px; height: 6px; border-right: 1.500px solid #a6a6a6; border-top: 1.500px solid #a6a6a6; transform: rotate(45deg); }
.car.open::before { left: 5px; top: 3px; border-color: #404040; transform: rotate(135deg); }
.l0 { padding-left: 4px; }
.l1 { padding-left: 4px; }
.l2 { padding-left: 23px; }
.hscroll { height: 17px; flex: none; background: #f0f0f0; display: flex; align-items: center; position: relative; }
.hl, .hr { width: 7px; height: 7px; border-left: 2px solid #606060; border-top: 2px solid #606060; }
.hl { margin-left: 6px; transform: rotate(-45deg); }
.hr { margin-right: 6px; margin-left: auto; transform: rotate(135deg); }
.hthumb { width: 135px; height: 17px; margin-left: 5px; background: #cdcdcd; }
.mid { width: 597px; flex: none; border-left: 2px solid #808080; border-top: 1px solid #808080; border-right: 1px solid #a0a0a0; border-bottom: 1px solid #ddd; }
.m0 { padding-left: 2px; }
.m1 { padding-left: 21px; }
.m2 { padding-left: 40px; }
.act { flex: 1; margin-right: 1px; border-left: 2px solid #808080; border-top: 2px solid #808080; border-right: 1px solid #a8a8a8; border-bottom: 1px solid #ddd; }
.act-h { height: 21px; background: #eee; border-bottom: 1px solid #a0a0a0; font-weight: bold; line-height: 21px; padding-left: 4px; }
.act-s { height: 26px; background: linear-gradient(#b7d0ea, #9cb5d3); display: flex; align-items: center; justify-content: space-between; padding: 0 8px 0 6px; }
.tri-up { width: 0; height: 0; border: 4.500px solid transparent; border-top: 0; border-bottom: 5px solid #000; }
.act-r { height: 23px; display: flex; align-items: center; justify-content: space-between; padding: 0 8px 0 30px; }
.tri-more { width: 0; height: 0; border: 4.500px solid transparent; border-right: 0; border-left: 5px solid #000; }
.status { height: 23px; flex: none; background: #eee; display: flex; }
.status i { border-right: 1px solid #dcdcdc; }
.st1 { width: 763px; }
.st2 { width: 133px; }
.st3 { flex: 1; border-right: 0 !important; }
```
